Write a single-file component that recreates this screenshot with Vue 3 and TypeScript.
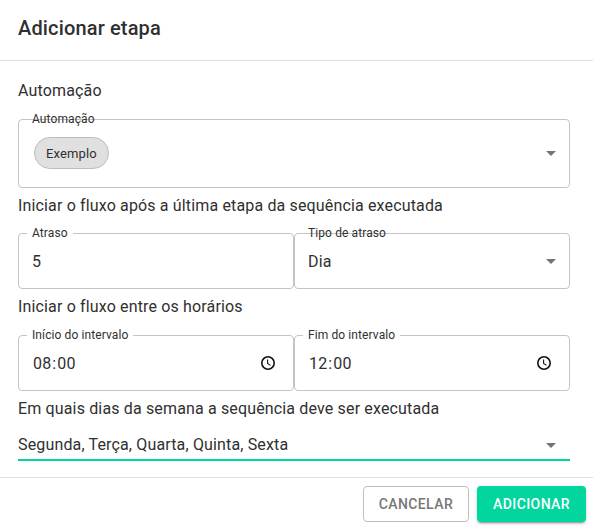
<script setup lang="ts">
interface TimeField {
  label: string
  hours: string
  minutes: string
}

const times: TimeField[] = [
  { label: 'Início do intervalo', hours: '08', minutes: '00' },
  { label: 'Fim do intervalo', hours: '12', minutes: '00' },
]
const days: string[] = ['Segunda', 'Terça', 'Quarta', 'Quinta', 'Sexta']
</script>

<template>
  <div class="dialog">
    <header class="header">
      <h2 class="title">Adicionar etapa</h2>
    </header>
    <main class="content">
      <p class="text">Automação</p>
      <div class="field tall">
        <span class="label">Automação</span>
        <span class="chip">Exemplo</span>
        <svg class="arrow" viewBox="0 0 24 24"><path d="M7 10l5 5 5-5z" /></svg>
      </div>

      <p class="text after-tall">Iniciar o fluxo após a última etapa da sequência executada</p>
      <div class="row">
        <div class="field">
          <span class="label notched">Atraso</span>
          <span class="value">5</span>
        </div>
        <div class="field">
          <span class="label">Tipo de atraso</span>
          <span class="value">Dia</span>
          <svg class="arrow" viewBox="0 0 24 24"><path d="M7 10l5 5 5-5z" /></svg>
        </div>
      </div>

      <p class="text">Iniciar o fluxo entre os horários</p>
      <div class="row">
        <div v-for="time in times" :key="time.label" class="field">
          <span class="label notched">{{ time.label }}</span>
          <span class="value time"><span>{{ time.hours }}</span>:<span>{{ time.minutes }}</span></span>
          <svg class="clock" viewBox="0 0 16 16">
            <circle cx="8" cy="8" r="6.2" />
            <path d="M7.6 4.6v3.8l2.9 2" />
          </svg>
        </div>
      </div>

      <p class="text">Em quais dias da semana a sequência deve ser executada</p>
      <div class="days">
        <span>{{ days.join(', ') }}</span>
        <svg class="arrow" viewBox="0 0 24 24"><path d="M7 10l5 5 5-5z" /></svg>
      </div>
    </main>
    <footer class="footer">
      <button class="button outlined" type="button">Cancelar</button>
      <button class="button contained" type="button">Adicionar</button>
    </footer>
  </div>
</template>

<style>
body {
  margin: 0;
  background: #fff;
}
</style>

<style scoped>
.dialog {
  box-sizing: border-box;
  height: 528px;
  display: flex;
  flex-direction: column;
  overflow: hidden;
  background: #fff;
  color: #303030;
  font: 400 16px/24px Roboto, sans-serif;
  letter-spacing: 0.00938em;
}
.dialog * {
  box-sizing: border-box;
}
.header {
  height: 61px;
  flex: none;
  padding: 12px 18px;
  border-bottom: 1px solid #e0e0e0;
}
.title {
  margin: 0;
  font-size: 20px;
  font-weight: 500;
  line-height: 32px;
  letter-spacing: 0.0075em;
}
.content {
  height: 416px;
  flex: none;
  padding: 18px 23px 0 18px;
}
.text {
  margin: 0 0 16px;
}
.row {
  display: flex;
  margin: 0 0 6px;
}
.text.after-tall {
  margin: 6px 0 15px;
}
.field {
  position: relative;
  display: flex;
  align-items: center;
  flex: 1;
  height: 56px;
  padding: 0 6px 0 13px;
  border: 1px solid #c4c4c4;
  border-radius: 4px;
}
.field.tall {
  height: 69px;
  padding-left: 15px;
  padding-bottom: 2px;
}
.value {
  padding-top: 2px;
}
.label {
  position: absolute;
  top: -9px;
  left: 8px;
  padding: 0 5px;
  font-size: 12px;
  line-height: 16px;
  letter-spacing: 0.1px;
  white-space: nowrap;
}
.label.notched {
  background: #fff;
}
.chip {
  height: 32px;
  padding: 0 11px;
  border: 1px solid #bdbdbd;
  border-radius: 16px;
  background: #e0e0e0;
  font-size: 13px;
  line-height: 31px;
}
.arrow {
  width: 24px;
  height: 24px;
  margin-left: auto;
  fill: #757575;
}
.time span {
  padding: 0 1px;
}
.clock {
  width: 16px;
  height: 16px;
  margin: 0 11px 0 auto;
  fill: none;
  stroke: #111;
  stroke-width: 1.6;
}
.clock path {
  stroke-width: 1.1;
}
.days {
  display: flex;
  align-items: center;
  height: 31px;
  margin-top: -7px;
  padding-right: 7px;
  border-bottom: 2px solid #00d69d;
}
.footer {
  display: flex;
  justify-content: flex-end;
  gap: 8px;
  flex: 1;
  padding: 8px 7px 7px;
  border-top: 1px solid #e0e0e0;
}
.button {
  height: 36px;
  border-radius: 4px;
  font: 500 14px/24px Roboto, sans-serif;
  letter-spacing: 0.02857em;
  text-transform: uppercase;
}
.outlined {
  padding: 5px 15px;
  border: 1px solid #bdbdbd;
  background: #fff;
  color: #777;
}
.contained {
  padding: 6px 16px;
  border: 0;
  background: #00d69d;
  color: #fff;
  box-shadow: 0 3px 1px -2px rgba(0, 0, 0, 0.2), 0 2px 2px rgba(0, 0, 0, 0.14), 0 1px 5px rgba(0, 0, 0, 0.12);
}
</style>
